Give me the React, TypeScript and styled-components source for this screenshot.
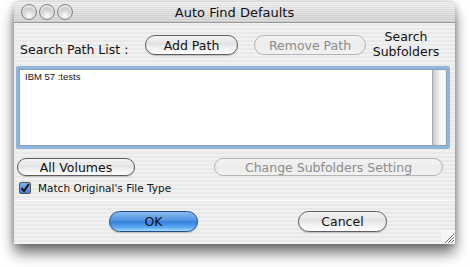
import React from "react";
import styled, { createGlobalStyle } from "styled-components";

const Global = createGlobalStyle`
  html, body { margin: 0; padding: 0; background: #ffffff; }
  body { font-family: "DejaVu Sans", "Liberation Sans", sans-serif; }
  * { box-sizing: border-box; }
`;

const Stage = styled.div`
  width: 470px;
  height: 267px;
  padding: 2px 15px 0 14px;
  background: #ffffff;
`;

const Win = styled.div`
  width: 441px;
  height: 242px;
  border-radius: 6px 6px 0 0;
  display: flex;
  flex-direction: column;
  background: repeating-linear-gradient(180deg, #f1f1f1 0px, #f1f1f1 2px, #e9e9e9 2px, #e9e9e9 4px);
  box-shadow: 0 9px 14px rgba(0, 0, 0, 0.55), 0 0 6px rgba(0, 0, 0, 0.25);
  overflow: hidden;
`;

const TitleBar = styled.div`
  height: 21px;
  flex: none;
  display: flex;
  align-items: center;
  padding-left: 7px;
  border-bottom: 1px solid #9a9a9a;
  background:
    repeating-linear-gradient(180deg, rgba(255,255,255,0.25) 0 1px, rgba(0,0,0,0.02) 1px 2px),
    linear-gradient(180deg, #ececec 0%, #dadada 55%, #cfcfcf 100%);
  position: relative;
`;

const Lights = styled.div`
  display: flex;
  gap: 2px;
`;

const Light = styled.span`
  width: 16px;
  height: 16px;
  border-radius: 50%;
  border: 1px solid #858585;
  background: radial-gradient(circle at 50% 78%, #fbfbfb 0%, #d6d6d6 45%, #aeaeae 100%);
  box-shadow: inset 0 2px 2px rgba(255,255,255,0.7);
`;

const Title = styled.div`
  position: absolute;
  left: 0;
  right: 0;
  top: 0;
  bottom: 0;
  display: flex;
  align-items: center;
  justify-content: center;
  font-size: 13px;
  color: #111;
  pointer-events: none;
`;

const Body = styled.div`
  flex: 1;
  display: flex;
  flex-direction: column;
  padding: 4px 0 0 2px;
`;

const TopRow = styled.div`
  height: 35px;
  display: flex;
  align-items: flex-start;
`;

const Label = styled.span`
  font-size: 12.5px;
  color: #111;
  margin: 15px 0 0 4px;
  width: 125px;
  white-space: nowrap;
`;

const Pill = styled.button<{ $w: number; $h?: number; $kind?: "normal" | "disabled" | "default" }>`
  width: ${(p) => p.$w}px;
  height: ${(p) => p.$h ?? 20}px;
  border-radius: ${(p) => (p.$h ?? 20) / 2}px;
  font-family: "DejaVu Sans", "Liberation Sans", sans-serif;
  font-size: 12.5px;
  padding: 0;
  flex: none;
  display: flex;
  align-items: center;
  justify-content: center;
  white-space: nowrap;
  color: ${(p) => (p.$kind === "disabled" ? "#8c8c8c" : "#111")};
  border: 1px solid ${(p) => (p.$kind === "disabled" ? "#b4b4b4" : p.$kind === "default" ? "#1f4c8c" : "#5e5e5e")};
  background: ${(p) =>
    p.$kind === "default"
      ? "linear-gradient(180deg, #8cbcf0 0%, #4f92e0 45%, #3380dc 52%, #58a6f2 80%, #a6dcff 100%)"
      : p.$kind === "disabled"
      ? "linear-gradient(180deg, #f3f3f3 0%, #ececec 50%, #f2f2f2 100%)"
      : "linear-gradient(180deg, #f4f4f4 0%, #e2e2e2 48%, #ececec 55%, #ffffff 100%)"};
  box-shadow: ${(p) => (p.$kind === "disabled" ? "none" : "0 1px 1px rgba(0,0,0,0.2)")};
`;

const Subfolders = styled.div`
  width: 72px;
  margin-left: 4px;
  margin-top: 2px;
  font-size: 12.5px;
  line-height: 15px;
  text-align: center;
  color: #111;
`;

const ListFrame = styled.div`
  margin: 4px 0 0 0;
  width: 434px;
  height: 83px;
  border: 3px solid #91b6de;
  border-radius: 2px;
  display: flex;
  background: #ffffff;
`;

const ListBody = styled.div`
  flex: 1;
  border: 1px solid #8e9eb4;
  border-right: none;
  padding: 1px 0 0 5px;
  font-family: "Liberation Sans", "DejaVu Sans", sans-serif;
  font-size: 9.5px;
  color: #111;
`;

const Track = styled.div`
  width: 15px;
  border: 1px solid #8e9eb4;
  border-left: 1px solid #a8a8a8;
  background: linear-gradient(90deg, #c8c8c8 0%, #e6e6e6 35%, #fafafa 70%, #f0f0f0 100%);
`;

const MidRow = styled.div`
  margin-top: 9px;
  display: flex;
  padding-left: 1px;
  gap: 79px;
`;

const CheckRow = styled.label`
  margin: 6px 0 0 3px;
  display: flex;
  align-items: center;
  gap: 7px;
  font-size: 10.5px;
  color: #111;
`;

const Box = styled.span`
  width: 12px;
  height: 12px;
  border: 1px solid #555;
  border-radius: 2px;
  background: linear-gradient(180deg, #7fb2ea, #3b82d6);
  display: flex;
  align-items: center;
  justify-content: center;
`;

const Sep = styled.div`
  margin-top: 6px;
  margin-left: -2px;
  height: 1px;
  background: #8c8c8c;
  border-bottom: 1px solid #fbfbfb;
`;

const BottomRow = styled.div`
  margin-top: 10px;
  display: flex;
  padding-left: 93px;
  gap: 100px;
`;

const Footer = styled.div`
  flex: 1;
  position: relative;
`;

const Grip = styled.svg`
  position: absolute;
  right: 0;
  bottom: 0;
`;

export default function App() {
  return (
    <>
      <Global />
      <Stage>
        <Win>
          <TitleBar>
            <Lights>
              <Light />
              <Light />
              <Light />
            </Lights>
            <Title>Auto Find Defaults</Title>
          </TitleBar>
          <Body>
            <TopRow>
              <Label>Search Path List :</Label>
              <Pill $w={93} style={{ marginTop: 8 }}>Add Path</Pill>
              <Pill $w={112} $kind="disabled" style={{ marginTop: 8, marginLeft: 16 }}>Remove Path</Pill>
              <Subfolders>Search<br />Subfolders</Subfolders>
            </TopRow>
            <ListFrame>
              <ListBody>IBM 57 :tests</ListBody>
              <Track />
            </ListFrame>
            <MidRow>
              <Pill $w={118} $h={18}>All Volumes</Pill>
              <Pill $w={229} $h={18} $kind="disabled">Change Subfolders Setting</Pill>
            </MidRow>
            <CheckRow>
              <Box>
                <svg width="10" height="10" viewBox="0 0 10 10">
                  <path d="M1.5 5.2 L4 8 L8.8 1.2" stroke="#111" strokeWidth="2" fill="none" />
                </svg>
              </Box>
              Match Original's File Type
            </CheckRow>
            <Sep />
            <Footer>
              <BottomRow>
                <Pill $w={89} $h={21} $kind="default">OK</Pill>
                <Pill $w={89} $h={21}>Cancel</Pill>
              </BottomRow>
              <Grip width="14" height="14" viewBox="0 0 14 14">
                <rect x="0" y="0" width="14" height="14" fill="#f6f6f6" />
                <path d="M4 13 L13 4 M7 13 L13 7 M10 13 L13 10" stroke="#6e6e6e" strokeWidth="1" />
                <path d="M5 13 L13 5 M8 13 L13 8 M11 13 L13 11" stroke="#ffffff" strokeWidth="1" />
              </Grip>
            </Footer>
          </Body>
        </Win>
      </Stage>
    </>
  );
}
